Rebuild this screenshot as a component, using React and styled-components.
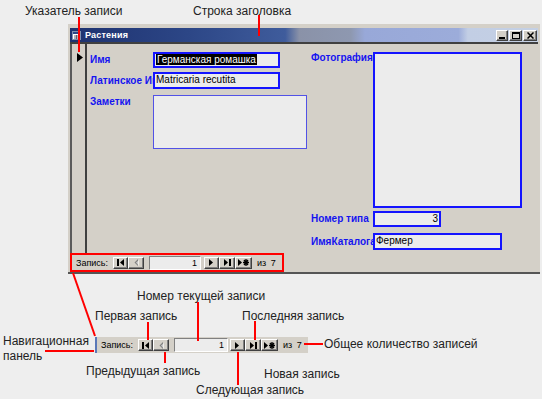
import React from "react";
import styled, { createGlobalStyle } from "styled-components";

const GlobalStyle = createGlobalStyle`
  html, body {
    margin: 0;
    padding: 0;
    background: #eeeeee;
  }
  body {
    font-family: "Liberation Sans", Arial, sans-serif;
  }
`;

const Page = styled.div`
  position: relative;
  width: 542px;
  height: 399px;
  overflow: hidden;
  background: #eeeeee;
  padding-top: 24px;
  box-sizing: border-box;
`;

const Window = styled.div`
  margin-left: 68px;
  width: 472px;
  background: #d4d0c8;
  padding: 4px 2px 0 2px;
  box-sizing: border-box;
  border-bottom: 2px solid #555555;
`;

const TitleBar = styled.div`
  display: flex;
  align-items: center;
  height: 16px;
  box-sizing: border-box;
  padding: 0 1px 0 2px;
  border-bottom: 2px solid #404040;
  background: linear-gradient(
    to right,
    #1e3270 0%,
    #2c4686 25%,
    #3f5c9c 46%,
    #8a92a8 49%,
    #8e98b0 60%,
    #98a8d8 63%,
    #9cacda 83%,
    #c2cee4 85%,
    #c4d0e4 100%
  );
`;

const TitleText = styled.span`
  margin-left: 4px;
  flex: 1;
  color: #ffffff;
  font-weight: bold;
  font-size: 9px;
  letter-spacing: 0.2px;
`;

const CaptionButton = styled.div`
  width: ${(p) => p.$w}px;
  height: 11px;
  margin-left: ${(p) => p.$gap}px;
  box-sizing: border-box;
  background: #d4d0c8;
  border-top: 1px solid #ffffff;
  border-left: 1px solid #ffffff;
  border-right: 1px solid #404040;
  border-bottom: 1px solid #404040;
  box-shadow: inset -1px -1px 0 #808080;
  display: flex;
  align-items: center;
  justify-content: center;
`;

const Body = styled.div`
  display: flex;
  height: 209px;
`;

const Selector = styled.div`
  width: 8px;
  border-left: 2px solid #5a5a5a;
  border-right: 2px solid #404040;
  padding: 4px 0 0 5px;
  box-sizing: content-box;
`;

const FormArea = styled.div`
  flex: 1;
  display: flex;
  padding: 8px 0 0 3px;
`;

const Column = styled.div`
  display: flex;
  flex-direction: column;
  width: ${(p) => (p.$w ? `${p.$w}px` : "auto")};
`;

const FieldRow = styled.div`
  display: flex;
  align-items: ${(p) => p.$align || "center"};
  margin-top: ${(p) => p.$gap || 0}px;
`;

const Label = styled.div`
  width: ${(p) => p.$w}px;
  padding-top: ${(p) => p.$pt || 0}px;
  color: #1414f0;
  font-weight: bold;
  font-size: 10px;
  line-height: 12px;
  white-space: nowrap;
  overflow: hidden;
`;

const Field = styled.div`
  width: ${(p) => p.$w}px;
  height: ${(p) => p.$h}px;
  box-sizing: border-box;
  border: ${(p) => (p.$thin ? "1px solid #5252e6" : "2px solid #1414ff")};
  background: #ececec;
  font-size: 10px;
  line-height: 12px;
  color: #000000;
  text-align: ${(p) => p.$align || "left"};
  padding: 0 1px;
  white-space: nowrap;
  overflow: hidden;
`;

const Selected = styled.span`
  background: #000000;
  color: #ffffff;
  padding: 0 1px;
`;

const BottomRow = styled.div`
  display: flex;
  height: 19px;
`;

const NavBar = styled.div`
  display: flex;
  align-items: center;
  box-sizing: border-box;
  width: ${(p) => p.$w}px;
  height: ${(p) => p.$h}px;
  padding-left: 4px;
  background: #d4d0c8;
  border: ${(p) => (p.$outlined ? "2px solid #ff0000" : "none")};
  border-left: ${(p) =>
    p.$outlined ? "2px solid #ff0000" : "2px solid #5a78b8"};
  font-size: 9px;
  color: #000000;
`;

const NavLabel = styled.span`
  width: 37px;
  white-space: nowrap;
`;

const NavButton = styled.div`
  width: ${(p) => p.$w}px;
  height: 12px;
  box-sizing: border-box;
  background: #d4d0c8;
  border-top: 1px solid #ffffff;
  border-left: 1px solid #ffffff;
  border-right: 1px solid #404040;
  border-bottom: 1px solid #404040;
  box-shadow: inset -1px -1px 0 #808080;
  display: flex;
  align-items: center;
  justify-content: center;
`;

const RecordInput = styled.div`
  width: ${(p) => p.$w}px;
  height: 14px;
  margin: 0 ${(p) => p.$after}px 0 5px;
  box-sizing: border-box;
  background: #ececec;
  border-top: 1px solid #808080;
  border-left: 1px solid #808080;
  border-right: 1px solid #ffffff;
  border-bottom: 1px solid #ffffff;
  text-align: right;
  padding-right: 3px;
  line-height: 12px;
`;

const NavTotal = styled.span`
  margin-left: 5px;
  white-space: nowrap;
  word-spacing: 2px;
`;

const Callout = styled.div`
  margin: 63px 0 0 95px;
`;

const Note = styled.div`
  position: absolute;
  left: ${(p) => p.$x}px;
  top: ${(p) => p.$y}px;
  font-size: 12px;
  line-height: 14px;
  color: #222222;
  white-space: nowrap;
`;

const Leaders = styled.svg`
  position: absolute;
  left: 0;
  top: 0;
  pointer-events: none;
`;

function Glyph({ kind }) {
  const c = "#000";
  if (kind === "first")
    return (
      <svg width="7" height="7" viewBox="0 0 7 7">
        <rect x="0" y="0" width="2" height="7" fill={c} />
        <polygon points="7,0 3,3.5 7,7" fill={c} />
      </svg>
    );
  if (kind === "prev")
    return (
      <svg width="5" height="7" viewBox="0 0 5 7">
        <polygon points="4,0 0.5,3.5 4,7" fill="#808080" />
        <polygon points="5,1 2,3.5 5,7" fill="#ffffff" opacity="0.6" />
      </svg>
    );
  if (kind === "next")
    return (
      <svg width="5" height="7" viewBox="0 0 5 7">
        <polygon points="0,0 4,3.5 0,7" fill={c} />
      </svg>
    );
  if (kind === "last")
    return (
      <svg width="7" height="7" viewBox="0 0 7 7">
        <polygon points="0,0 4,3.5 0,7" fill={c} />
        <rect x="5" y="0" width="2" height="7" fill={c} />
      </svg>
    );
  return (
    <svg width="11" height="7" viewBox="0 0 11 7">
      <polygon points="0,0 4,3.5 0,7" fill={c} />
      <path d="M8 0 V7 M5 3.5 H11 M6 1 L10 6 M10 1 L6 6" stroke={c} strokeWidth="1.3" />
    </svg>
  );
}

function Navigator({ outlined, width, height, inputWidth, inputAfter }) {
  return (
    <NavBar $outlined={outlined} $w={width} $h={height}>
      <NavLabel>Запись:</NavLabel>
      <NavButton $w={15}>
        <Glyph kind="first" />
      </NavButton>
      <NavButton $w={16}>
        <Glyph kind="prev" />
      </NavButton>
      <RecordInput $w={inputWidth} $after={inputAfter}>
        1
      </RecordInput>
      <NavButton $w={15}>
        <Glyph kind="next" />
      </NavButton>
      <NavButton $w={16}>
        <Glyph kind="last" />
      </NavButton>
      <NavButton $w={17}>
        <Glyph kind="new" />
      </NavButton>
      <NavTotal>из 7</NavTotal>
    </NavBar>
  );
}

const notes = [
  { text: "Указатель записи", x: 25, y: 4 },
  { text: "Строка заголовка", x: 193, y: 4 },
  { text: "Номер текущей записи", x: 137, y: 289 },
  { text: "Первая запись", x: 95, y: 309 },
  { text: "Последняя запись", x: 242, y: 309 },
  { text: "Навигационная", x: 3, y: 334 },
  { text: "панель", x: 3, y: 349 },
  { text: "Общее количество записей", x: 324, y: 337 },
  { text: "Предыдущая запись", x: 86, y: 364 },
  { text: "Новая запись", x: 264, y: 367 },
  { text: "Следующая запись", x: 196, y: 383 },
];

const lines = [
  [79, 17, 79, 52],
  [259, 15, 259, 36],
  [198, 302, 198, 341],
  [148, 322, 148, 340],
  [255, 321, 255, 340],
  [304, 344, 323, 344],
  [165, 352, 165, 363],
  [238, 352, 238, 385],
  [45, 351, 94, 351],
  [73, 273, 95, 336],
];

export default function App() {
  return (
    <>
      <GlobalStyle />
      <Page>
        <Window>
          <TitleBar>
            <svg width="9" height="9" viewBox="0 0 9 9">
              <rect x="0.5" y="0.5" width="8" height="8" fill="#ffffff" stroke="#8090b0" />
              <rect x="1" y="1" width="7" height="2" fill="#2c4686" />
              <path d="M2 5 H7 M2 7 H7 M4.5 4 V8" stroke="#606070" strokeWidth="1" />
            </svg>
            <TitleText>Растения</TitleText>
            <CaptionButton $w={12} $gap={0}>
              <svg width="6" height="7" viewBox="0 0 6 7">
                <rect x="0" y="5" width="6" height="2" fill="#000" />
              </svg>
            </CaptionButton>
            <CaptionButton $w={13} $gap={1}>
              <svg width="8" height="7" viewBox="0 0 8 7">
                <rect x="0.5" y="0.5" width="7" height="6" fill="none" stroke="#000" />
                <rect x="0" y="0" width="8" height="2" fill="#000" />
              </svg>
            </CaptionButton>
            <CaptionButton $w={14} $gap={1}>
              <svg width="7" height="7" viewBox="0 0 7 7">
                <path d="M0.5 0.5 L6.5 6.5 M6.5 0.5 L0.5 6.5" stroke="#000" strokeWidth="1.5" />
              </svg>
            </CaptionButton>
          </TitleBar>
          <Body>
            <Selector>
              <svg width="6" height="9" viewBox="0 0 6 9">
                <polygon points="0,0 6,4.5 0,9" fill="#000" />
              </svg>
            </Selector>
            <FormArea>
              <Column $w={221}>
                <FieldRow>
                  <Label $w={63}>Имя</Label>
                  <Field $w={127} $h={16}>
                    <Selected>Германская ромашка</Selected>
                  </Field>
                </FieldRow>
                <FieldRow $gap={4}>
                  <Label $w={63}>Латинское Имя</Label>
                  <Field $w={127} $h={17}>
                    Matricaria recutita
                  </Field>
                </FieldRow>
                <FieldRow $gap={6} $align="flex-start">
                  <Label $w={63} $pt={1}>
                    Заметки
                  </Label>
                  <Field $w={154} $h={54} $thin />
                </FieldRow>
              </Column>
              <Column>
                <FieldRow $align="flex-start">
                  <Label $w={62} $pt={0}>
                    Фотография
                  </Label>
                  <Field $w={149} $h={156} />
                </FieldRow>
                <FieldRow $gap={3}>
                  <Label $w={62}>Номер типа</Label>
                  <Field $w={68} $h={16} $align="right">
                    3
                  </Field>
                </FieldRow>
                <FieldRow $gap={6}>
                  <Label $w={62}>ИмяКаталога</Label>
                  <Field $w={129} $h={17}>
                    Фермер
                  </Field>
                </FieldRow>
              </Column>
            </FormArea>
          </Body>
          <BottomRow>
            <Navigator outlined width={214} height={19} inputWidth={52} inputAfter={3} />
          </BottomRow>
        </Window>
        <Callout>
          <Navigator width={213} height={16} inputWidth={54} inputAfter={2} />
        </Callout>
        {notes.map((n) => (
          <Note key={n.text} $x={n.x} $y={n.y}>
            {n.text}
          </Note>
        ))}
        <Leaders width="542" height="399" viewBox="0 0 542 399">
          {lines.map(([x1, y1, x2, y2], i) => (
            <line key={i} x1={x1} y1={y1} x2={x2} y2={y2} stroke="#ff0000" strokeWidth="2" />
          ))}
        </Leaders>
      </Page>
    </>
  );
}
